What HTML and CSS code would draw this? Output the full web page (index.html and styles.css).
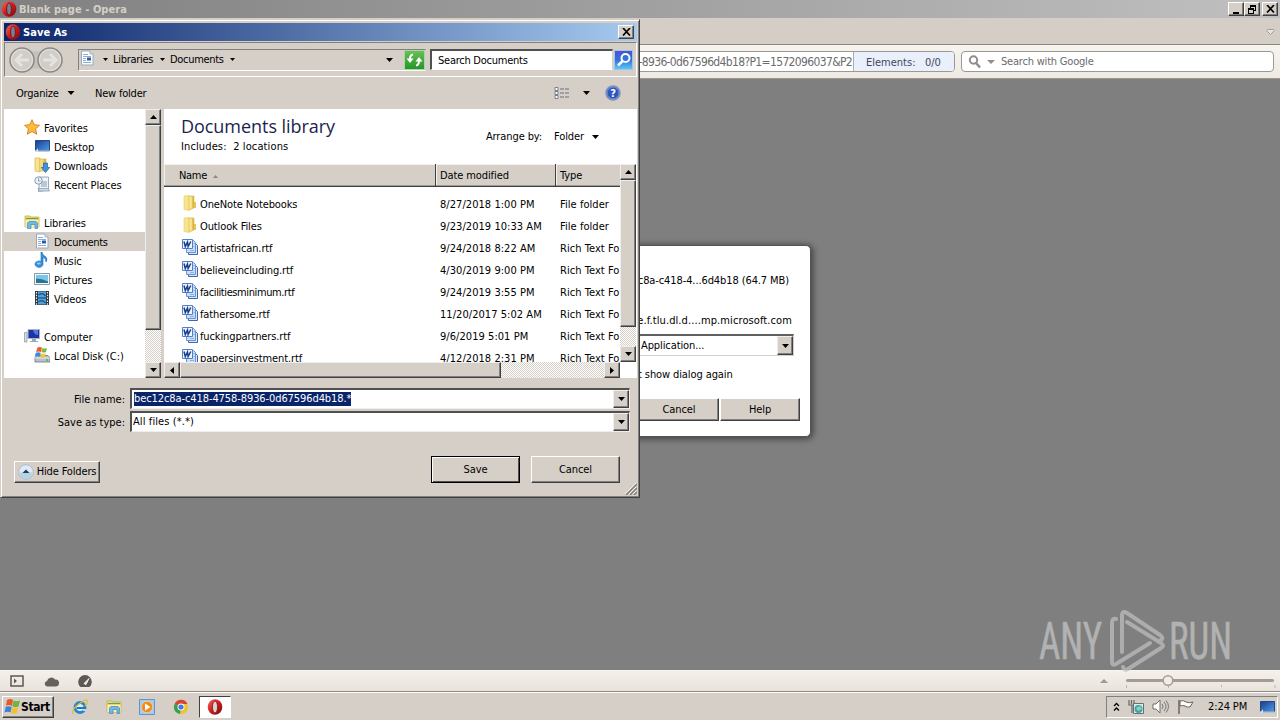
FILE: index.html
```html
<!DOCTYPE html>
<html lang="en">
<head>
    <meta charset="UTF-8">
    <title>Blank page - Opera</title>
    <link rel="stylesheet" href="styles.css">
</head>
<body>

    <!-- Shared icons -->
    <svg class="defs" width="0" height="0">
        <defs>
            <linearGradient id="red" x1="0" y1="0" x2="1" y2="1">
                <stop offset="0" stop-color="#f56a60"/><stop offset=".5" stop-color="#cc1a1d"/><stop offset="1" stop-color="#740b0e"/>
            </linearGradient>
            <linearGradient id="folder" x1="0" y1="0" x2="1" y2="0">
                <stop offset="0" stop-color="#fff0a0"/><stop offset="1" stop-color="#d9ad38"/>
            </linearGradient>
            <linearGradient id="screen" x1="0" y1="0" x2="1" y2="1">
                <stop offset="0" stop-color="#173d8c"/><stop offset="1" stop-color="#4f9be8"/>
            </linearGradient>
            <symbol id="opera" viewBox="0 0 16 16">
                <ellipse cx="8" cy="8" rx="7.3" ry="7.8" fill="url(#red)"/>
                <ellipse cx="8" cy="8" rx="2.5" ry="5.9" fill="#ddd6d0" stroke="#8b1114" stroke-width=".8"/>
            </symbol>
            <symbol id="opera-dark" viewBox="0 0 16 16">
                <ellipse cx="8" cy="8" rx="7.3" ry="7.8" fill="url(#red)"/>
                <ellipse cx="8" cy="8" rx="2.4" ry="5.9" fill="#75808f" stroke="#7b0f12" stroke-width=".9"/>
            </symbol>
            <symbol id="down" viewBox="0 0 7 4"><path d="M0 0h7L3.5 4z" fill="#000"/></symbol>
            <symbol id="up" viewBox="0 0 7 4"><path d="M0 4h7L3.5 0z" fill="#000"/></symbol>
            <symbol id="left" viewBox="0 0 4 7"><path d="M4 0v7L0 3.5z" fill="#000"/></symbol>
            <symbol id="right" viewBox="0 0 4 7"><path d="M0 0v7l4-3.5z" fill="#000"/></symbol>
            <symbol id="doc" viewBox="0 0 16 16">
                <path d="M2.500 1h8.500l3 3v11h-11.500z" fill="#fff" stroke="#9aa9bd"/>
                <path d="M11 1v3h3" fill="#dde8f3" stroke="#8b9bb0" stroke-width=".7"/>
                <path d="M4 4.500h5M4 6.500h8M4 8.500h3M4 10.500h3M4 12.500h8" stroke="#8fadd3"/>
                <path d="M8 7.500h4v3H8z" fill="#2b5ea6"/>
            </symbol>
            <symbol id="word" viewBox="0 0 16 16">
                <path d="M6.500 3.500h6l3 3v9h-9z" fill="#dbe8fb" stroke="#3c67ad"/>
                <path d="M4.500 1.500h7l2 2v10h-9z" fill="#c9dcf8" stroke="#6a93cf"/>
                <path d="M8 11.500h4M11.500 4.500h1.500M11.500 7.500h1.500" stroke="#8db2e6"/>
                <path d="M.5.500h10v9H.5z" fill="#f0f6ff" stroke="#5580c2"/>
                <path d="M2 2.500l1.300 5 2.200-4.500.6 4.500 2.700-5" fill="none" stroke="#173f8e" stroke-width="1.500"/>
            </symbol>
            <symbol id="dir" viewBox="0 0 16 16">
                <path d="M2 1l5-.5 1 14.500-1 .5-5-1z" fill="#f7e48c" stroke="#e6cd6c" stroke-width=".6"/>
                <path d="M7 1h5v12l-5 2z" fill="url(#folder)" stroke="#d9b94b" stroke-width=".6"/>
                <path d="M9 2v11" stroke="#fff2a6"/>
                <path d="M12 7h2v6h-2z" fill="#e3c65a"/>
            </symbol>
            <symbol id="libs" viewBox="0 0 16 16">
                <path d="M1 2h5l1 1h8v10H1z" fill="#f3dd7e" stroke="#ceaa43" stroke-width=".8"/>
                <path d="M2 4.500h12" stroke="#5aa85a" stroke-width="1.200"/>
                <path d="M1.500 6h13v7h-13z" fill="#fbeea6"/>
                <path d="M3.500 14.500V9l1.500-1.500h7L13.500 9v5.500h-2.500V10.500h-4v4z" fill="#6eb9e8" stroke="#3d86bd" stroke-width=".7"/>
            </symbol>
            <symbol id="desktop" viewBox="0 0 16 16">
                <path d="M1.500 2.500h14v10h-14z" fill="url(#screen)" stroke="#24477f"/>
                <path d="M1 13h14.500" stroke="#a9bccf" stroke-width="1.500"/>
                <path d="M1 14l3-4v4z" fill="#cfe2f4"/>
            </symbol>
        </defs>
    </svg>

    <div class="browser">
        <div class="titlebar">
            <svg class="i16"><use href="#opera-dark"/></svg>
            <span class="title">Blank page - Opera</span>
            <div class="controls">
                <div class="ctl"><svg width="9" height="9"><path d="M1 7h6v2H1z"/></svg></div>
                <div class="ctl"><svg width="10" height="9"><path d="M3 0h6v6H7V5h1V2H4v1H3zM1 3h6v6H1zm1 2v3h4V5z" fill-rule="evenodd"/></svg></div>
                <div class="ctl close"><svg width="9" height="8"><path d="M1 0l7 7.500M8 0L1 7.500" stroke="#000" stroke-width="1.700"/></svg></div>
            </div>
        </div>
        <div class="tabs">
            <svg width="9" height="6"><path d="M.5 1.500L1.500.500h6l1 1-4 4z" fill="#e8e4de" stroke="#a39d96"/></svg>
        </div>
        <div class="address">
            <div class="url">
                <span class="url-text">bec12c8a-c418-4758-8936-0d67596d4b18?P1=1572096037&amp;P2</span>
                <span class="elements">Elements:&nbsp;&nbsp; 0/0</span>
            </div>
            <div class="search">
                <svg width="14" height="14"><circle cx="5.500" cy="5" r="3.700" fill="none" stroke="#908d89" stroke-width="2"/><path d="M8 8l4 4.500" stroke="#908d89" stroke-width="2.500"/></svg>
                <svg class="gray-arrow" width="8" height="4"><path d="M0 0h8L4 4z" fill="#928f8b"/></svg>
                <span>Search with Google</span>
            </div>
        </div>
        <div class="page"></div>
        <div class="status">
            <svg width="14" height="12"><path d="M1 1h12v10H1z" fill="none" stroke="#5c5854" stroke-width="1.500"/><path d="M4 3.500L7 6 4 8.500z" fill="#5c5854"/></svg>
            <svg width="15" height="11"><path d="M3 10.500a2.800 2.800 0 0 1 0-5.500 4.500 4.500 0 0 1 8-1.500 3.500 3.500 0 0 1 1 7z" fill="#65615d"/></svg>
            <svg width="14" height="12"><path d="M2.500 12a6.800 6.800 0 1 1 9 0z" fill="#5c5854"/><path d="M6 8.500l5-5-3 6z" fill="#eee" stroke="#eee"/></svg>
            <div class="zoom">
                <svg width="152" height="18">
                    <path d="M3.500 8.500h145" stroke="#a49c95" stroke-width="3" stroke-linecap="round"/>
                    <path d="M2.500 13v3M44.500 13v3M97.500 13v2M151 13v3" stroke="#bbb3ac"/>
                    <circle cx="44" cy="8.500" r="4.800" fill="#f2ece6" stroke="#a49c95" stroke-width="1.500"/>
                </svg>
            </div>
            <svg class="zoom-arrow" width="8" height="4"><path d="M0 4h8L4 0z" fill="#a19992"/></svg>
        </div>
    </div>

    <!-- Download dialog -->
    <div class="download">
        <p class="file">2c8a-c418-4...6d4b18 (64.7 MB)</p>
        <p class="server">e.f.tlu.dl.d....mp.microsoft.com</p>
        <div class="combo">
            <span>Application...</span>
            <div class="drop"><svg width="7" height="4"><use href="#down"/></svg></div>
        </div>
        <p class="again">t show dialog again</p>
        <div class="dl-buttons">
            <div class="btn">Cancel</div>
            <div class="btn">Help</div>
        </div>
    </div>

    <!-- Save As dialog -->
    <div class="save">
        <div class="save-title">
            <svg class="i16"><use href="#opera-dark"/></svg>
            <span class="title">Save As</span>
            <div class="ctl"><svg width="9" height="8"><path d="M1 0l7 7.500M8 0L1 7.500" stroke="#000" stroke-width="1.700"/></svg></div>
        </div>

        <div class="nav">
            <svg class="back" width="56" height="28">
                <path d="M14 3q14 5 28 0v22q-14-5-28 0z" fill="#c4c0ba"/>
                <g fill="#d0cdc8" stroke="#8c8984" stroke-width="1.500"><circle cx="14" cy="14" r="12"/><circle cx="42" cy="14" r="12"/></g>
                <g fill="none" stroke="#e5e3df"><circle cx="14" cy="14" r="10.500"/><circle cx="42" cy="14" r="10.500"/></g>
                <g fill="none" stroke="#e4e2df" stroke-width="3"><path d="M21 14H9M14 8l-6 6 6 6M35 14h12M42 8l6 6-6 6"/></g>
            </svg>
            <div class="crumbs">
                <svg class="i16"><use href="#doc"/></svg>
                <svg class="arr a1" width="5" height="3"><use href="#down"/></svg>
                <span class="c1">Libraries</span>
                <svg class="arr" width="5" height="3"><use href="#down"/></svg>
                <span class="c2">Documents</span>
                <svg class="arr" width="5" height="3"><use href="#down"/></svg>
                <svg class="arr last" width="7" height="4"><use href="#down"/></svg>
            </div>
            <div class="refresh">
                <svg width="19" height="18">
                    <path d="M8 3.500Q5 4 5 8M11 14.500q3-.5 3-4.500" fill="none" stroke="#fff" stroke-width="2"/>
                    <path d="M1.500 7.500h7L5 12zM10.500 10.500h7L14 6z" fill="#fff"/>
                </svg>
            </div>
            <div class="search-docs">Search Documents</div>
            <div class="go"><svg width="18" height="18"><circle cx="10.500" cy="7" r="4" fill="#3573dd" stroke="#fff" stroke-width="2"/><path d="M7.500 10L3 14.500" stroke="#fff" stroke-width="2.500"/></svg></div>
        </div>

        <div class="toolbar">
            <span class="organize">Organize</span>
            <svg width="8" height="4"><use href="#down"/></svg>
            <span class="newfolder">New folder</span>
            <svg class="view" width="16" height="13">
                <path d="M1 .5h3v3H1zM1 4.500h3v3H1zM1 8.500h3v3H1z" fill="#fff" stroke="#77808c"/>
                <path d="M6 2h4M11 2h4M6 6h4M11 6h4M6 10h4M11 10h4" stroke="#66707d"/>
            </svg>
            <svg class="view-arrow" width="7" height="4"><use href="#down"/></svg>
            <svg class="help" width="16" height="16"><circle cx="8" cy="8" r="7" fill="#2c56b9" stroke="#8292bd" stroke-width="1.500"/><circle cx="8" cy="8" r="5.800" fill="none" stroke="#87a5e6" stroke-width=".6"/><text x="8" y="12" text-anchor="middle">?</text></svg>
        </div>

        <div class="body">
            <div class="side">
                <div class="row top">
                    <svg class="i16" viewBox="0 0 16 16"><path d="M8 .7l2.200 5 5.300.6-4 3.600 1.200 5.300L8 12.500l-4.700 2.700 1.200-5.300-4-3.600 5.300-.6z" fill="#fbbd3d" stroke="#dc8425"/></svg>
                    <span>Favorites</span>
                </div>
                <div class="row"><svg class="i16"><use href="#desktop"/></svg><span>Desktop</span></div>
                <div class="row">
                    <svg class="i16" viewBox="0 0 16 16"><path d="M1 1h5v14l-5-1z" fill="#f8e48c" stroke="#d9b34a" stroke-width=".7"/><path d="M6 2h6v12H6z" fill="url(#folder)" stroke="#d9b34a" stroke-width=".7"/><path d="M9.500 6h4v4.500h2.200L11.500 15.500 7.300 10.500h2.200z" fill="#3f91dc" stroke="#2362a7" stroke-width=".7"/></svg>
                    <span>Downloads</span>
                </div>
                <div class="row">
                    <svg class="i16" viewBox="0 0 16 16"><path d="M5 1h9.500v13l-10 1.500V12H5z" fill="#edf3f8" stroke="#8197ac" stroke-width=".8"/><path d="M4 12.500h10.500l1 2.500H6z" fill="#cedbe5" stroke="#8197ac" stroke-width=".7"/><path d="M7 6h6M7 8h6M7 10h6" stroke="#829db4"/><circle cx="4.500" cy="4.500" r="3.700" fill="#eaf2f8" stroke="#899daf"/><path d="M4.500 2v3h2" fill="none" stroke="#6b8195" stroke-width=".7"/></svg>
                    <span>Recent Places</span>
                </div>
                <div class="row"></div>
                <div class="row top">
                    <svg class="i16"><use href="#libs"/></svg>
                    <span>Libraries</span>
                </div>
                <div class="row selected"><svg class="i16"><use href="#doc"/></svg><span>Documents</span></div>
                <div class="row">
                    <svg class="i16" viewBox="0 0 16 16"><path d="M8 0q.5 3.500 3.500 4.500 2.700 2.500.5 5.500.3-3.500-3-4.500v6.500a4 3.200 0 1 1-2-2.600V0z" fill="#3491dd" stroke="#1d6cb6" stroke-width=".6"/><ellipse cx="4.800" cy="11.500" rx="2" ry="1" fill="#8fd0f7"/></svg>
                    <span>Music</span>
                </div>
                <div class="row">
                    <svg class="i16" viewBox="0 0 16 16"><path d="M.5 2.500h15v11H.5z" fill="#f5f9fb" stroke="#8799aa"/><path d="M2 4h12v8H2z" fill="#79c6ea"/><path d="M2 7.500q6 0 12 3V12H2z" fill="#28768e"/></svg>
                    <span>Pictures</span>
                </div>
                <div class="row">
                    <svg class="i16" viewBox="0 0 16 16"><path d="M1 1h14v14H1z" fill="#293442"/><path d="M4 1.500h8v6H4zM4 8.500h8v6H4z" fill="#52a2dc"/><path d="M4.500 5q4-3 7 1M4.500 12q4-3 7 1" stroke="#205988" stroke-width="1.500" fill="none"/><path d="M2.500 2v13M13.500 2v13" stroke="#eee" stroke-width="1.200" stroke-dasharray="1.500 1.300"/></svg>
                    <span>Videos</span>
                </div>
                <div class="row"></div>
                <div class="row top">
                    <svg class="i16" viewBox="0 0 16 16"><path d="M4 1.500h11.500v9H4z" fill="#1b35a7" stroke="#aab6c2"/><path d="M9 2h5v5q-4 0-5-5z" fill="#5277dd"/><path d="M8 11h4v2h2v1H6v-1h2z" fill="#9caab8"/><path d="M.5 4.500h2.500v9.500H.5z" fill="#d8dfe5" stroke="#82909e" stroke-width=".7"/></svg>
                    <span>Computer</span>
                </div>
                <div class="row">
                    <svg class="i16" viewBox="0 0 16 16"><path d="M1 10.500l2-2h11l2 2v4.500H1z" fill="#b7c1c9" stroke="#697781" stroke-width=".8"/><path d="M1 11h14.500" stroke="#eee"/><path d="M12 13h2" stroke="#32c44c" stroke-width="1.500"/><path d="M3.500.500q2-1 4.500 0L7 5Q4.500 4 2 5z" fill="#eb5d2b"/><path d="M8.500 1q2 1.200 4.500 0l-1 4q-2.500 1-4.500 0z" fill="#7cb83e"/><path d="M1.800 5.700q2.500-1 5 0l-1 4q-2.500-1-5 0z" fill="#3d8adb"/><path d="M7.300 6.200q2 1 4.500 0l-1 4q-2.500 1-4.500 0z" fill="#f6c438"/></svg>
                    <span>Local Disk (C:)</span>
                </div>
            </div>
            <div class="vscroll side-scroll">
                <div class="sb"><svg width="7" height="4"><use href="#up"/></svg></div>
                <div class="thumb"></div>
                <div class="sb end"><svg width="7" height="4"><use href="#down"/></svg></div>
            </div>

            <div class="main">
                <div class="lib-head">
                    <div>
                        <h1>Documents library</h1>
                        <p>Includes:&nbsp; 2 locations</p>
                    </div>
                    <div class="arrange">
                        <span>Arrange by:</span>
                        <span class="by">Folder</span>
                        <svg width="7" height="4"><use href="#down"/></svg>
                    </div>
                </div>
                <div class="list-area">
                    <div class="list">
                        <div class="cols">
                            <div class="col name">Name <svg width="5" height="3"><path d="M0 3h5L2.500 0z" fill="#8a8681"/></svg></div>
                            <div class="col date">Date modified</div>
                            <div class="col type">Type</div>
                        </div>
                        <div class="files">
                            <div class="f"><svg class="i16"><use href="#dir"/></svg><span class="n">OneNote Notebooks</span><span class="d">8/27/2018 1:00 PM</span><span>File folder</span></div>
                            <div class="f"><svg class="i16"><use href="#dir"/></svg><span class="n">Outlook Files</span><span class="d">9/23/2019 10:33 AM</span><span>File folder</span></div>
                            <div class="f"><svg class="i16"><use href="#word"/></svg><span class="n">artistafrican.rtf</span><span class="d">9/24/2018 8:22 AM</span><span>Rich Text Fo</span></div>
                            <div class="f"><svg class="i16"><use href="#word"/></svg><span class="n">believeincluding.rtf</span><span class="d">4/30/2019 9:00 PM</span><span>Rich Text Fo</span></div>
                            <div class="f"><svg class="i16"><use href="#word"/></svg><span class="n tight">facilitiesminimum.rtf</span><span class="d">9/24/2019 3:55 PM</span><span>Rich Text Fo</span></div>
                            <div class="f"><svg class="i16"><use href="#word"/></svg><span class="n">fathersome.rtf</span><span class="d">11/20/2017 5:02 AM</span><span>Rich Text Fo</span></div>
                            <div class="f"><svg class="i16"><use href="#word"/></svg><span class="n">fuckingpartners.rtf</span><span class="d">9/6/2019 5:01 PM</span><span>Rich Text Fo</span></div>
                            <div class="f"><svg class="i16"><use href="#word"/></svg><span class="n">papersinvestment.rtf</span><span class="d">4/12/2018 2:31 PM</span><span>Rich Text Fo</span></div>
                        </div>
                    </div>
                    <div class="vscroll list-scroll">
                        <div class="sb"><svg width="7" height="4"><use href="#up"/></svg></div>
                        <div class="thumb"></div>
                        <div class="sb end"><svg width="7" height="4"><use href="#down"/></svg></div>
                    </div>
                </div>
                <div class="hscroll">
                    <div class="sb"><svg width="4" height="7"><use href="#left"/></svg></div>
                    <div class="thumb"></div>
                    <div class="sb end"><svg width="4" height="7"><use href="#right"/></svg></div>
                </div>
            </div>
        </div>

        <div class="fields">
            <div class="field">
                <label>File name:</label>
                <div class="input"><span class="hl">bec12c8a-c418-4758-8936-0d67596d4b18.*</span><div class="drop"><svg width="7" height="4"><use href="#down"/></svg></div></div>
            </div>
            <div class="field">
                <label>Save as type:</label>
                <div class="input"><span>All files (*.*)</span><div class="drop"><svg width="7" height="4"><use href="#down"/></svg></div></div>
            </div>
        </div>

        <div class="actions">
            <div class="btn hide">
                <svg width="16" height="16"><circle cx="8" cy="8" r="7.300" fill="#dcebf5" stroke="#aebdca"/><path d="M1.500 8.500h13a6.500 6.500 0 0 1-13 0z" fill="#b5d2e6"/><path d="M4.500 9h7L8 5.500z" fill="#243b53"/></svg>
                Hide Folders
            </div>
            <div class="btn ok">Save</div>
            <div class="btn cancel">Cancel</div>
        </div>
        <svg class="grip" width="12" height="12"><path d="M1 12L12 1M5 12l7-7M9 12l3-3" stroke="#817c76" stroke-width="1.500"/><path d="M0 11L11 0M4 11l7-7M8 11l3-3" stroke="#fff" stroke-width=".8"/></svg>
    </div>

    <!-- Watermark -->
    <svg class="watermark" width="200" height="64">
        <text x="4" y="51" textLength="63" lengthAdjust="spacingAndGlyphs">ANY</text>
        <text x="134" y="51" textLength="63" lengthAdjust="spacingAndGlyphs">RUN</text>
        <g fill="none" stroke="#bdbdbd" stroke-width="4" stroke-linejoin="round" stroke-linecap="round">
            <path d="M81 11q-4-1-4 4v39q0 4 4 2l34-21"/>
            <path d="M87 44V8q0-6 5-3l33 22q4 3 1 5l-2 2"/>
            <path d="M91 19l34 21q4 3 0 5L92 66q-4 2-5-2" transform="translate(1 -5)"/>
        </g>
    </svg>

    <div class="taskbar">
        <div class="start">
            <svg width="17" height="16" viewBox="0 0 17 16"><path d="M3 1q3-2 6 0L8 7Q5 5.500 2 6.500z" fill="#e8582a"/><path d="M9.500 1.500q3 1.500 6.500 0l-1.500 6q-3 1.500-6 0z" fill="#73b43a"/><path d="M1.700 7.700q3-1 6 .3l-1.200 5.500q-3-1.500-6 0z" fill="#3a83d8"/><path d="M8.200 8.500q3 1.500 6 0L13 14q-3 1.500-6 0z" fill="#f5c02e"/></svg>
            <span>Start</span>
        </div>
        <div class="quick">
            <svg class="i16" viewBox="0 0 16 16"><circle cx="8" cy="8.500" r="5" fill="#d8eefa" stroke="#2687cf" stroke-width="3"/><path d="M5 9h9" stroke="#2176c0" stroke-width="2"/><path d="M11 11h4" stroke="#d4d0c8" stroke-width="2"/><path d="M1 15Q-1 11 7 5t8-3q1 2-2 5" fill="none" stroke="#e6b932" stroke-width="1.300"/></svg>
            <svg class="i16"><use href="#libs"/></svg>
            <svg class="i16" viewBox="0 0 16 16"><path d="M.5.5h15v15H.5z" fill="#a3ccef" stroke="#5e96ca"/><circle cx="8" cy="8" r="5.700" fill="#f28b1e" stroke="#fcd6a0" stroke-width=".7"/><path d="M6 4.500v7L11.500 8z" fill="#fff"/></svg>
            <svg class="i16" viewBox="0 0 16 16"><circle cx="8" cy="8" r="7" fill="#f2c12e"/><path d="M8 8L1.700 4.700A7.100 7.100 0 0 1 14.500 5H8z" fill="#d94332"/><path d="M8 8l-1 7A7.100 7.100 0 0 1 1.700 4.700z" fill="#35a052"/><circle cx="8" cy="8" r="3.500" fill="#fff"/><circle cx="8" cy="8" r="2.600" fill="#3e7de0"/></svg>
            <div class="task"><svg class="i16"><use href="#opera"/></svg></div>
        </div>
        <div class="tray">
            <svg width="7" height="10"><path d="M1 4l2.500-2.500L6 4M1 8.500L3.500 6 6 8.500" fill="none" stroke="#000" stroke-width="1.300"/></svg>
            <svg width="16" height="16"><path d="M1 1v5h3v8M4 6h2V1M3.500 1v4" fill="none" stroke="#65686b" stroke-width="1.200"/><path d="M5.500 4.500h10v10h-10z" fill="#dfe8ec" stroke="#63717a"/><circle cx="10.500" cy="10" r="4" fill="#44a698"/><path d="M8 9l4-2 2 3-4 2z" fill="#84d2cc"/></svg>
            <svg width="17" height="15"><path d="M1 5h3l4-4v13l-4-4H1z" fill="#fff" stroke="#6f6d6a"/><path d="M10 5q2 2.500 0 5M12 3q4 4.500 0 9M14 1.500q5 6 0 12" fill="none" stroke="#777571"/></svg>
            <svg width="17" height="16"><path d="M2 1v14" stroke="#68655f" stroke-width="1.500"/><path d="M3 2q4-1 6 1 3 1.500 7 0l-3 5q-3 .5-5-1-2-1-5 0z" fill="#fff" stroke="#68655f"/></svg>
            <span class="clock">2:24 PM</span>
            <svg class="i16"><use href="#desktop"/></svg>
        </div>
    </div>

</body>
</html>
```

FILE: styles.css
```css
* {
    box-sizing: border-box;
}

body {
    margin: 0;
    width: 1280px;
    height: 720px;
    overflow: hidden;
    position: relative;
    background: #7f7f7f;
    font-family: "DejaVu Sans Condensed", "DejaVu Sans", sans-serif;
    font-stretch: condensed;
    font-size: 11px;
    line-height: 14px;
    letter-spacing: -0.1px;
    color: #000;
    white-space: nowrap;
}

p, h1 {
    margin: 0;
}

svg {
    display: block;
    flex: none;
}

.defs {
    position: absolute;
}

.i16 {
    width: 16px;
    height: 16px;
    flex: none;
}

.title {
    padding-top: 1px;
    font-weight: bold;
    letter-spacing: 0.05px;
}

/* Browser window */
.browser {
    display: flex;
    flex-direction: column;
    height: 692px;
}

.titlebar {
    height: 18px;
    display: flex;
    align-items: center;
    padding: 0 2px 0 1px;
    gap: 2px;
    background: linear-gradient(90deg, #808080, #c0c0c0);
    color: #d5cfc8;
}

.controls {
    display: flex;
    margin-left: auto;
}

.ctl {
    width: 16px;
    height: 14px;
    display: flex;
    align-items: center;
    justify-content: center;
    background: #d5cfc8;
    border: 1px solid;
    border-color: #fff #404040 #404040 #fff;
    box-shadow: inset -1px -1px #808080;
}

.ctl.close {
    margin-left: 2px;
}

.tabs {
    height: 26px;
    background: #d5cec7;
    display: flex;
    align-items: center;
    justify-content: flex-end;
    padding: 2px 5px 0 0;
}

.address {
    height: 35px;
    display: flex;
    align-items: center;
    justify-content: flex-end;
    gap: 6px;
    padding: 0 6px 0 0;
    background: linear-gradient(#f7f4ef, #eeeae3);
    border-top: 1px solid #8b8880;
    border-bottom: 1px solid #9a9588;
    color: #6c6c6c;
}

.url, .search {
    height: 21px;
    display: flex;
    align-items: center;
    background: #fff;
    border: 1px solid #9b9993;
    border-radius: 4px;
    overflow: hidden;
}

.url {
    width: 500px;
    justify-content: flex-end;
}

.url-text {
    font-size: 12px;
    letter-spacing: -0.65px;
    padding: 1px 1px 0 0;
}

.elements {
    width: 101px;
    height: 19px;
    padding: 4px 0 0 12px;
    background: #e9effb;
    border-left: 1px solid #a9adb5;
    color: #44475c;
    letter-spacing: 0;
}

.search {
    width: 313px;
    padding-left: 6px;
}

.gray-arrow {
    margin: 0 6px 0 5px;
}

.search span {
    padding-top: 1px;
    letter-spacing: -0.2px;
}

.page {
    flex: 1;
    background: #7f7f7f;
}

.status {
    height: 22px;
    display: flex;
    align-items: center;
    gap: 19.500px;
    padding-left: 10px;
    background: linear-gradient(#f6f0eb, #e9e3dc);
    border-top: 1px solid #f8f5f1;
    border-bottom: 1px solid #8f8b84;
}

.zoom {
    order: 2;
    padding-right: 4px;
}

.zoom-arrow {
    margin-left: auto;
    margin-right: -3px;
}

/* Buttons */
.btn {
    display: flex;
    align-items: center;
    justify-content: center;
    background: #d5cfc8;
    border: 1px solid;
    border-color: #fff #404040 #404040 #fff;
    box-shadow: inset -1px -1px #808080;
}

.drop {
    width: 16px;
    margin-left: auto;
    display: flex;
    align-items: center;
    justify-content: center;
    background: #d5cfc8;
    border: 1px solid;
    border-color: #eee #404040 #404040 #eee;
    box-shadow: inset -1px -1px #808080;
}

/* Download dialog */
.download {
    position: absolute;
    left: 600px;
    top: 245px;
    width: 211px;
    height: 192px;
    padding-top: 28px;
    background: #fff;
    border: 1px solid #555;
    border-radius: 5px;
    box-shadow: 1px 1px 6px 1px rgba(0, 0, 0, 0.5);
}

.download .file {
    text-align: right;
    padding-right: 21px;
}

.download .server {
    text-align: right;
    margin-top: 26px;
    padding-right: 18px;
    letter-spacing: 0.1px;
}

.combo {
    height: 22px;
    width: 193px;
    margin-top: 6px;
    display: flex;
    border: 1px solid;
    border-color: #606060 #d5cfc8 #d5cfc8 #606060;
    border-top-width: 2px;
}

.combo span {
    padding: 3px 0 0 39px;
}

.again {
    margin-top: 12px;
    padding-left: 37px;
}

.dl-buttons {
    display: flex;
    gap: 1px;
    margin-top: 16px;
    padding-left: 38px;
}

.dl-buttons .btn {
    width: 80px;
    height: 23px;
}

/* Save As dialog */
.save {
    position: absolute;
    left: 0;
    top: 19px;
    width: 640px;
    height: 479px;
    padding: 3px 2px 0 3px;
    background: #d5cfc8;
    border: 1px solid;
    border-color: #d5cfc8 #404040 #404040 #d5cfc8;
    box-shadow: inset 1px 1px #fff, inset -1px -1px #808080;
}

.save-title {
    height: 18px;
    display: flex;
    align-items: center;
    gap: 2px;
    padding: 0 3px 0 1px;
    background: linear-gradient(90deg, #0a246a, #a6caf0);
    color: #fff;
}

.save-title .ctl {
    margin-left: auto;
}

.nav {
    height: 35px;
    margin-top: 1px;
    display: flex;
    align-items: center;
    padding-left: 3px;
    border: 1px solid;
    border-color: #808080 #fff #fff #808080;
}

.crumbs {
    width: 348px;
    height: 22px;
    margin-left: 14px;
    padding-left: 1px;
    display: flex;
    align-items: center;
    border: 1px solid;
    border-color: #808080 #d5cfc8 #fff #808080;
}

.crumbs .i16 {
    margin: -3px 1px 0 -1px;
}

.crumbs .a1 {
    margin-left: 7px;
}

.crumbs span {
    margin: 0 5px;
    letter-spacing: -0.3px;
}

.crumbs .c1 {
    width: 42px;
}

.crumbs .c2 {
    width: 55px;
}

.crumbs .last {
    margin-left: auto;
    margin-right: 32px;
}

.refresh {
    margin-left: -22px;
    width: 21px;
    height: 20px;
    background: linear-gradient(#6abf55, #24962a);
    border: 1px solid #a9d8a0;
}

.search-docs {
    width: 183px;
    height: 21px;
    margin-left: 5px;
    padding: 3px 0 0 6px;
    background: #fff;
    border: 1px solid;
    border-width: 2px 1px 1px 2px;
    border-color: #505050 #d5cfc8 #fff #505050;
    letter-spacing: -0.25px;
}

.go {
    width: 19px;
    height: 20px;
    margin-left: 1px;
    background: linear-gradient(#4a55cd, #2f72df 50%, #55c9f5);
    border: 1px solid #aac1ea;
}

.toolbar {
    height: 32px;
    display: flex;
    align-items: center;
    padding-left: 12px;
    letter-spacing: -0.2px;
}

.toolbar span {
    padding-top: 1px;
}

.toolbar .organize {
    width: 51px;
}

.toolbar .newfolder {
    margin-left: 20px;
}

.view {
    margin-left: auto;
}

.view-arrow {
    margin: 0 15px 0 13px;
}

.help {
    margin-right: 16px;
}

.help text {
    fill: #fff;
    font-weight: bold;
}

.body {
    height: 269px;
    display: flex;
}

/* Navigation pane */
.side {
    width: 141px;
    padding-top: 9px;
    background: #fff;
}

.row {
    height: 19px;
    display: flex;
    align-items: center;
    gap: 4px;
    padding-left: 30px;
}

.row .i16 {
    margin-top: -2px;
}

.row span {
    padding-top: 2px;
}

.row.top {
    padding-left: 20px;
}

.row.selected {
    background: #d5cfc8;
    letter-spacing: -0.3px;
}

/* Scrollbars */
.vscroll, .hscroll {
    display: flex;
    background: repeating-conic-gradient(#fff 0 25%, #d5cfc8 0 50%) 0 0 / 2px 2px;
}

.vscroll {
    width: 16px;
    flex-direction: column;
}

.sb, .thumb {
    background: #d5cfc8;
    border: 1px solid;
    border-color: #eee #404040 #404040 #eee;
    box-shadow: inset -1px -1px #808080;
}

.sb {
    width: 16px;
    height: 16px;
    flex: none;
    display: flex;
    align-items: center;
    justify-content: center;
}

.side-scroll .thumb {
    height: 205px;
}

.vscroll .end {
    margin-top: auto;
}

.main {
    width: 473px;
    margin-left: 3px;
    background: #fff;
}

.lib-head {
    height: 55px;
    display: flex;
    justify-content: space-between;
    padding: 7px 38px 0 17px;
}

h1 {
    font-family: "Open Sans", sans-serif;
    font-size: 18px;
    font-weight: 400;
    font-stretch: normal;
    line-height: 20px;
    letter-spacing: -0.05px;
    color: #1c1f4e;
}

.lib-head p {
    margin-top: 4px;
    letter-spacing: 0.12px;
}

.arrange {
    height: 14px;
    margin-top: 14px;
    display: flex;
    align-items: center;
}

.arrange .by {
    margin: 0 8px 0 12px;
}

.list-area {
    display: flex;
    height: 198px;
}

.list {
    width: 456px;
    overflow: hidden;
}

.cols {
    height: 23px;
    display: flex;
}

.col {
    flex: none;
    display: flex;
    align-items: center;
    padding: 2px 0 0 4px;
    background: #d5cfc8;
    border-bottom: 1px solid #404040;
    border-right: 1px solid #404040;
    box-shadow: inset 0 -1px #a09b95, inset 1px 1px #f3f1ee;
}

.col.name {
    width: 272px;
    padding-left: 15px;
    gap: 6px;
    letter-spacing: -0.3px;
}

.col.date {
    width: 120px;
}

.col.type {
    width: 64px;
    border-right: none;
}

.files {
    height: 175px;
    padding-top: 6px;
    overflow: hidden;
}

.f {
    height: 22px;
    display: flex;
    align-items: center;
    padding-left: 18px;
    letter-spacing: 0.05px;
}

.f .i16 {
    margin-top: -2px;
}

.f span {
    padding-top: 1px;
}

.f .n {
    width: 242px;
    padding-left: 2px;
    flex: none;
    letter-spacing: -0.12px;
}

.f .tight {
    letter-spacing: -0.4px;
}

.f .d {
    width: 120px;
    flex: none;
}

.list-scroll .thumb {
    height: 147px;
}

.hscroll {
    width: 456px;
    height: 16px;
}

.hscroll .thumb {
    width: 321px;
}

.hscroll .end {
    margin-left: auto;
}

/* File name and type */
.fields {
    padding: 9px 7px 0 0;
}

.field {
    display: flex;
    align-items: center;
    height: 23px;
}

.field label {
    width: 121px;
    padding-top: 2px;
    margin-right: 5px;
    text-align: right;
    letter-spacing: 0;
}

.input {
    flex: 1;
    height: 21px;
    display: flex;
    background: #fff;
    border: 1px solid;
    border-width: 2px 1px 1px 2px;
    border-color: #505050 #eee #eee #505050;
}

.input span {
    height: 14px;
    margin: 2px 0 0 1px;
    letter-spacing: 0.1px;
}

.input .hl {
    margin-left: 2px;
    background: #0a246a;
    color: #fff;
    letter-spacing: -0.09px;
}

.actions {
    display: flex;
    padding: 23px 17px 0 10px;
}

.actions .btn {
    width: 89px;
    height: 27px;
}

.actions .hide {
    width: 86px;
    height: 22px;
    margin: 5px auto 0 0;
    gap: 3px;
    letter-spacing: -0.15px;
}

.actions .ok {
    border-color: #000;
    box-shadow: inset 1px 1px #fff, inset -1px -1px #505050;
    margin-right: 11px;
}

.grip {
    position: absolute;
    right: 2px;
    bottom: 2px;
}

/* Watermark over the page */
.watermark {
    position: absolute;
    left: 1035px;
    top: 608px;
    opacity: 0.75;
}

.watermark text {
    font-family: Roboto, sans-serif;
    font-size: 52px;
    letter-spacing: 0;
    fill: #c4c4c4;
    stroke: #c4c4c4;
    stroke-width: 0.5px;
}

/* Taskbar */
.taskbar {
    height: 28px;
    display: flex;
    align-items: center;
    padding: 0 2px;
    background: #d5cfc8;
    border-top: 1px solid #fff;
}

.start {
    width: 52px;
    height: 22px;
    display: flex;
    align-items: center;
    padding-left: 1px;
    font-weight: bold;
    font-size: 12px;
    letter-spacing: -0.4px;
    border: 1px solid;
    border-color: #fff #404040 #404040 #fff;
    box-shadow: inset -1px -1px #808080;
}

.quick {
    display: flex;
    align-items: center;
    gap: 17.500px;
    margin-left: 18px;
}

.task {
    width: 32px;
    height: 22px;
    margin-left: -7px;
    display: flex;
    align-items: center;
    justify-content: center;
    background: #fff;
    border: 1px solid;
    border-color: #404040 #fff #fff #404040;
}

.tray {
    width: 172px;
    height: 22px;
    margin-left: auto;
    display: flex;
    align-items: center;
    gap: 8px;
    padding: 0 2px 0 6px;
    border: 1px solid;
    border-color: #808080 #fff #fff #808080;
}

.clock {
    margin: 0 auto 0 6px;
}
```
